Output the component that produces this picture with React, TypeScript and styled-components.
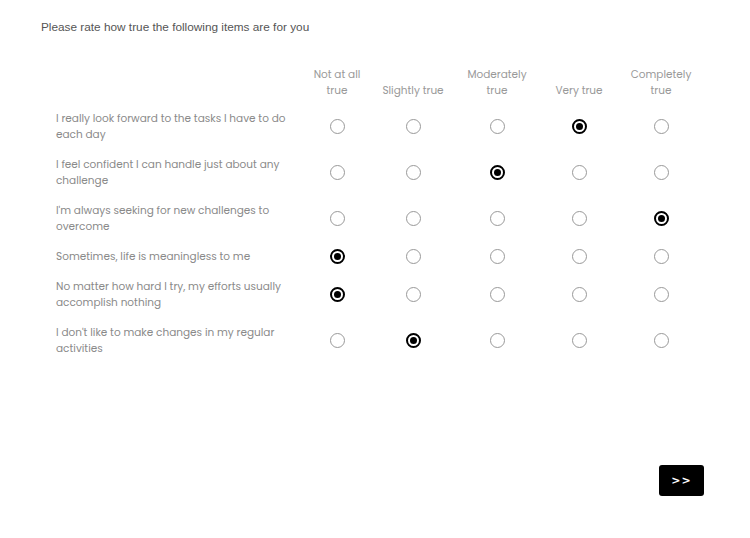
import styled, { createGlobalStyle } from 'styled-components';

const GlobalStyle = createGlobalStyle`
  body {
    margin: 0;
    background: #fff;
  }
`;

const columns = ['Not at all true', 'Slightly true', 'Moderately true', 'Very true', 'Completely true'];

const items = [
  { text: 'I really look forward to the tasks I have to do each day', value: 3 },
  { text: 'I feel confident I can handle just about any challenge', value: 2 },
  { text: "I'm always seeking for new challenges to overcome", value: 4 },
  { text: 'Sometimes, life is meaningless to me', value: 0 },
  { text: 'No matter how hard I try, my efforts usually accomplish nothing', value: 0 },
  { text: "I don't like to make changes in my regular activities", value: 1 },
];

export default function App() {
  return (
    <SPage>
      <GlobalStyle />
      <STitle>Please rate how true the following items are for you</STitle>
      <SGrid>
        <SHeadCell />
        {columns.map((c) => (
          <SHeadCell key={c}>
            <SHeadText>{c}</SHeadText>
          </SHeadCell>
        ))}
        {items.map((item) => (
          <SRow key={item.text}>
            <SLabel>{item.text}</SLabel>
            {columns.map((c, i) => (
              <SCell key={c}>
                <SRadio $checked={item.value === i} />
              </SCell>
            ))}
          </SRow>
        ))}
      </SGrid>
      <SFooter>
        <SNext>&gt;&gt;</SNext>
      </SFooter>
    </SPage>
  );
}

const SPage = styled.div`
  width: 750px;
  height: 538px;
  box-sizing: border-box;
  padding: 20px 46px 0 41px;
  display: flex;
  flex-direction: column;
`;

const STitle = styled.div`
  font-family: 'Liberation Sans', Arial, sans-serif;
  font-size: 11.8px;
  line-height: 14px;
  color: #555;
`;

const SGrid = styled.div`
  margin-top: 33px;
  margin-left: 15px;
  display: grid;
  grid-template-columns: 244px 74px 78px 90px 74px 90px;
`;

const SRow = styled.div`
  display: contents;
`;

const SHeadCell = styled.div`
  font-family: 'Poppins', 'Open Sans', sans-serif;
  font-size: 10.5px;
  line-height: 16px;
  color: #999;
  text-align: center;
  padding: 0 0 4px;
  display: flex;
  align-items: flex-end;
  justify-content: center;
`;

const SHeadText = styled.span`
  max-width: 64px;
`;

const SLabel = styled.div`
  font-family: 'Poppins', 'Open Sans', sans-serif;
  font-size: 10.5px;
  line-height: 16px;
  color: #8a8a8a;
  padding: 8px 0 6px;
  display: flex;
  align-items: center;
`;

const SCell = styled.div`
  display: flex;
  align-items: center;
  justify-content: center;
`;

const SRadio = styled.span<{ $checked: boolean }>`
  width: 15px;
  height: 15px;
  box-sizing: border-box;
  border-radius: 50%;
  border: ${(p) => (p.$checked ? '2px solid #000' : '1.5px solid #999')};
  display: flex;
  align-items: center;
  justify-content: center;
  &::after {
    content: '';
    display: ${(p) => (p.$checked ? 'block' : 'none')};
    width: 7px;
    height: 7px;
    border-radius: 50%;
    background: #000;
  }
`;

const SFooter = styled.div`
  margin-top: auto;
  margin-bottom: 42px;
  display: flex;
  justify-content: flex-end;
`;

const SNext = styled.button`
  width: 45px;
  height: 31px;
  border: none;
  border-radius: 3px;
  background: #000;
  color: #fff;
  font-family: 'DejaVu Sans', sans-serif;
  font-size: 11px;
  font-weight: bold;
  letter-spacing: 1px;
  padding: 0;
`;
